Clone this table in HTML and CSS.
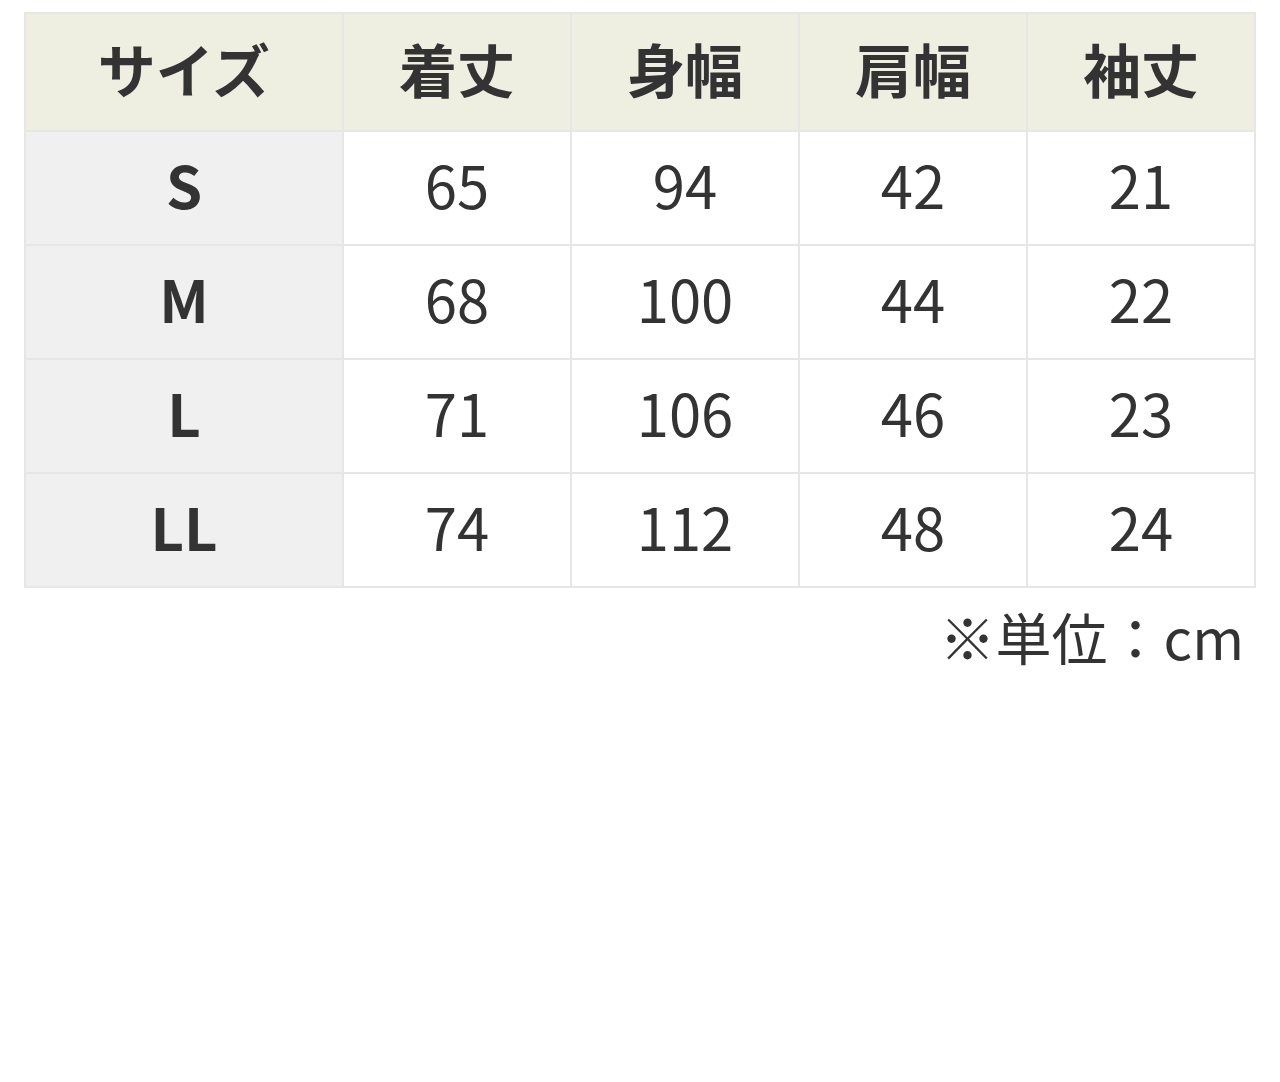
FILE: index.html
```html
<!DOCTYPE html>
<html lang="ja">
<head>
<meta charset="utf-8">
<title>サイズ表</title>
<link rel="stylesheet" href="styles.css">
</head>
<body>
<div class="wrap">
  <table class="size-table">
    <colgroup>
      <col class="c-size">
      <col class="c-val">
      <col class="c-val">
      <col class="c-val">
      <col class="c-val">
    </colgroup>
    <thead>
      <tr>
        <th>サイズ</th>
        <th>着丈</th>
        <th>身幅</th>
        <th>肩幅</th>
        <th>袖丈</th>
      </tr>
    </thead>
    <tbody>
      <tr><th>S</th><td>65</td><td>94</td><td>42</td><td>21</td></tr>
      <tr><th>M</th><td>68</td><td>100</td><td>44</td><td>22</td></tr>
      <tr><th>L</th><td>71</td><td>106</td><td>46</td><td>23</td></tr>
      <tr><th>LL</th><td>74</td><td>112</td><td>48</td><td>24</td></tr>
    </tbody>
  </table>
  <p class="note">※単位：cm</p>
</div>
</body>
</html>
```

FILE: styles.css
```css
html, body {
  margin: 0;
  padding: 0;
  background: #ffffff;
}

body {
  font-family: "Noto Sans CJK JP", "Noto Sans", sans-serif;
  color: #333333;
}

.wrap {
  padding: 12px 24px 0 24px;
}

.size-table {
  width: 1232px;
  border-collapse: collapse;
  table-layout: fixed;
}

.c-size { width: 318px; }
.c-val { width: 228px; }

.size-table th,
.size-table td {
  border: 2px solid #e6e6e6;
  text-align: center;
  vertical-align: middle;
  padding: 0 0 9px 0;
  font-size: 58px;
  line-height: 1;
}

.size-table thead th {
  background: #efefe1;
  height: 107px;
  font-weight: 700;
}

.size-table tbody th {
  background: #f0f0f0;
  font-weight: 700;
}

.size-table tbody td {
  background: #ffffff;
  font-weight: 400;
}

.size-table tbody tr {
  height: 114px;
}

.note {
  margin: 14px 12px 0 0;
  text-align: right;
  font-size: 56px;
  line-height: 1.2;
}
```
